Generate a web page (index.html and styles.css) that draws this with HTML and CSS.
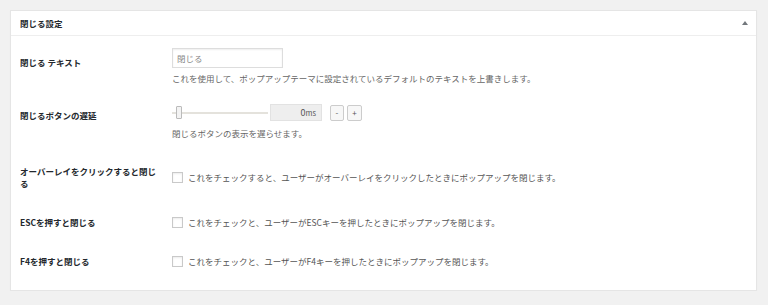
FILE: index.html
```html
<!DOCTYPE html>
<html lang="ja">

<head>
    <meta charset="UTF-8">
    <meta name="viewport" content="width=device-width, initial-scale=1.0">
    <title>閉じる設定</title>
    <link rel="stylesheet" href="styles.css">
</head>

<body>
    <div class="postbox">
        <div class="postbox-header">
            <h2 class="postbox-title">閉じる設定</h2>
            <span class="toggle-arrow"></span>
        </div>

        <div class="fields">
            <div class="row row-text">
                <div class="label">閉じる テキスト</div>
                <div class="field">
                    <input type="text" class="text-input" value="閉じる">
                    <p class="desc">これを使用して、ポップアップテーマに設定されているデフォルトのテキストを上書きします。</p>
                </div>
            </div>

            <div class="row row-range">
                <div class="label">閉じるボタンの遅延</div>
                <div class="field">
                    <div class="range-wrap">
                        <div class="range-track">
                            <span class="range-handle"></span>
                        </div>
                        <div class="range-value">0<span class="unit">ms</span></div>
                        <div class="range-btns">
                            <button class="range-btn">-</button>
                            <button class="range-btn">+</button>
                        </div>
                    </div>
                    <p class="desc">閉じるボタンの表示を遅らせます。</p>
                </div>
            </div>

            <div class="row row-check first-check">
                <div class="label">オーバーレイをクリックすると閉じる</div>
                <div class="field">
                    <label class="check"><span class="checkbox"></span>これをチェックすると、ユーザーがオーバーレイをクリックしたときにポップアップを閉じます。</label>
                </div>
            </div>

            <div class="row row-check">
                <div class="label">ESCを押すと閉じる</div>
                <div class="field">
                    <label class="check"><span class="checkbox"></span>これをチェックと、ユーザーがESCキーを押したときにポップアップを閉じます。</label>
                </div>
            </div>

            <div class="row row-check">
                <div class="label">F4を押すと閉じる</div>
                <div class="field">
                    <label class="check"><span class="checkbox"></span>これをチェックと、ユーザーがF4キーを押したときにポップアップを閉じます。</label>
                </div>
            </div>
        </div>
    </div>
</body>

</html>
```

FILE: styles.css
```css
* {
    margin: 0;
    padding: 0;
    box-sizing: border-box;
    font-family: "Noto Sans CJK JP", "Noto Sans", sans-serif;
}

body {
    background: #f1f1f1;
    color: #444;
    font-size: 8.5px;
    padding: 10px 11px 0 10px;
}

.postbox {
    background: white;
    border: 1px solid #e5e5e5;
    box-shadow: 0 1px 1px rgba(0, 0, 0, 0.04);
}

.postbox-header {
    height: 25px;
    display: flex;
    align-items: center;
    justify-content: space-between;
    padding: 0 8px 0 9px;
    border-bottom: 1px solid #eee;
}

.postbox-title {
    font-size: 8.5px;
    font-weight: 700;
    color: #23282d;
}

.toggle-arrow {
    width: 0;
    height: 0;
    border-left: 3px solid transparent;
    border-right: 3px solid transparent;
    border-bottom: 4px solid #72777c;
}

.fields {
    padding: 2px 9px 9px;
}

.row {
    display: grid;
    grid-template-columns: 152px 1fr;
    padding: 10px 0;
}

.row-check {
    padding: 13px 0 14px;
    align-items: center;
}

.first-check {
    padding-top: 16px;
}

.label {
    font-weight: 700;
    color: #23282d;
    line-height: 12px;
    max-width: 140px;
}

.row-text .label {
    padding-top: 4px;
    line-height: 20px;
}

.row-range .label {
    padding-top: 3px;
    line-height: 17px;
}

.field {
    line-height: 12px;
}

.text-input {
    width: 111px;
    height: 20px;
    border: 1px solid #ddd;
    box-shadow: inset 0 1px 2px rgba(0, 0, 0, 0.07);
    padding: 0 4px;
    font-size: 8.5px;
    color: #888;
    outline: none;
}

.desc {
    color: #666;
    margin-top: 4px;
    line-height: 12px;
}

.row-range .desc {
    margin-top: 6px;
}

.range-wrap {
    display: flex;
    align-items: center;
    height: 17px;
}

.range-track {
    position: relative;
    width: 96px;
    height: 2px;
    background: #e4e2dc;
    margin-right: 2px;
}

.range-handle {
    position: absolute;
    left: 4px;
    top: -6px;
    width: 6px;
    height: 13px;
    background: #f3f3f3;
    border: 1px solid #bbb;
    border-radius: 1px;
}

.range-value {
    width: 52px;
    height: 17px;
    background: #eee;
    border: 1px solid #e2e2e2;
    text-align: right;
    padding-right: 5px;
    line-height: 15px;
    font-size: 9px;
    color: #555;
}

.unit {
    font-size: 7.5px;
}

.range-btns {
    display: flex;
    gap: 3px;
    margin-left: 8px;
}

.range-btn {
    width: 14px;
    height: 16px;
    background: #f7f7f7;
    border: 1px solid #ccc;
    border-radius: 2px;
    font-size: 8px;
    line-height: 12px;
    color: #555;
}

.range-btn:last-child {
    width: 15px;
}

.check {
    display: flex;
    align-items: center;
    color: #555;
}

.checkbox {
    width: 11px;
    height: 11px;
    border: 1px solid #c9c9c9;
    box-shadow: inset 0 1px 2px rgba(0, 0, 0, 0.08);
    margin-right: 5px;
    background: white;
}
```
